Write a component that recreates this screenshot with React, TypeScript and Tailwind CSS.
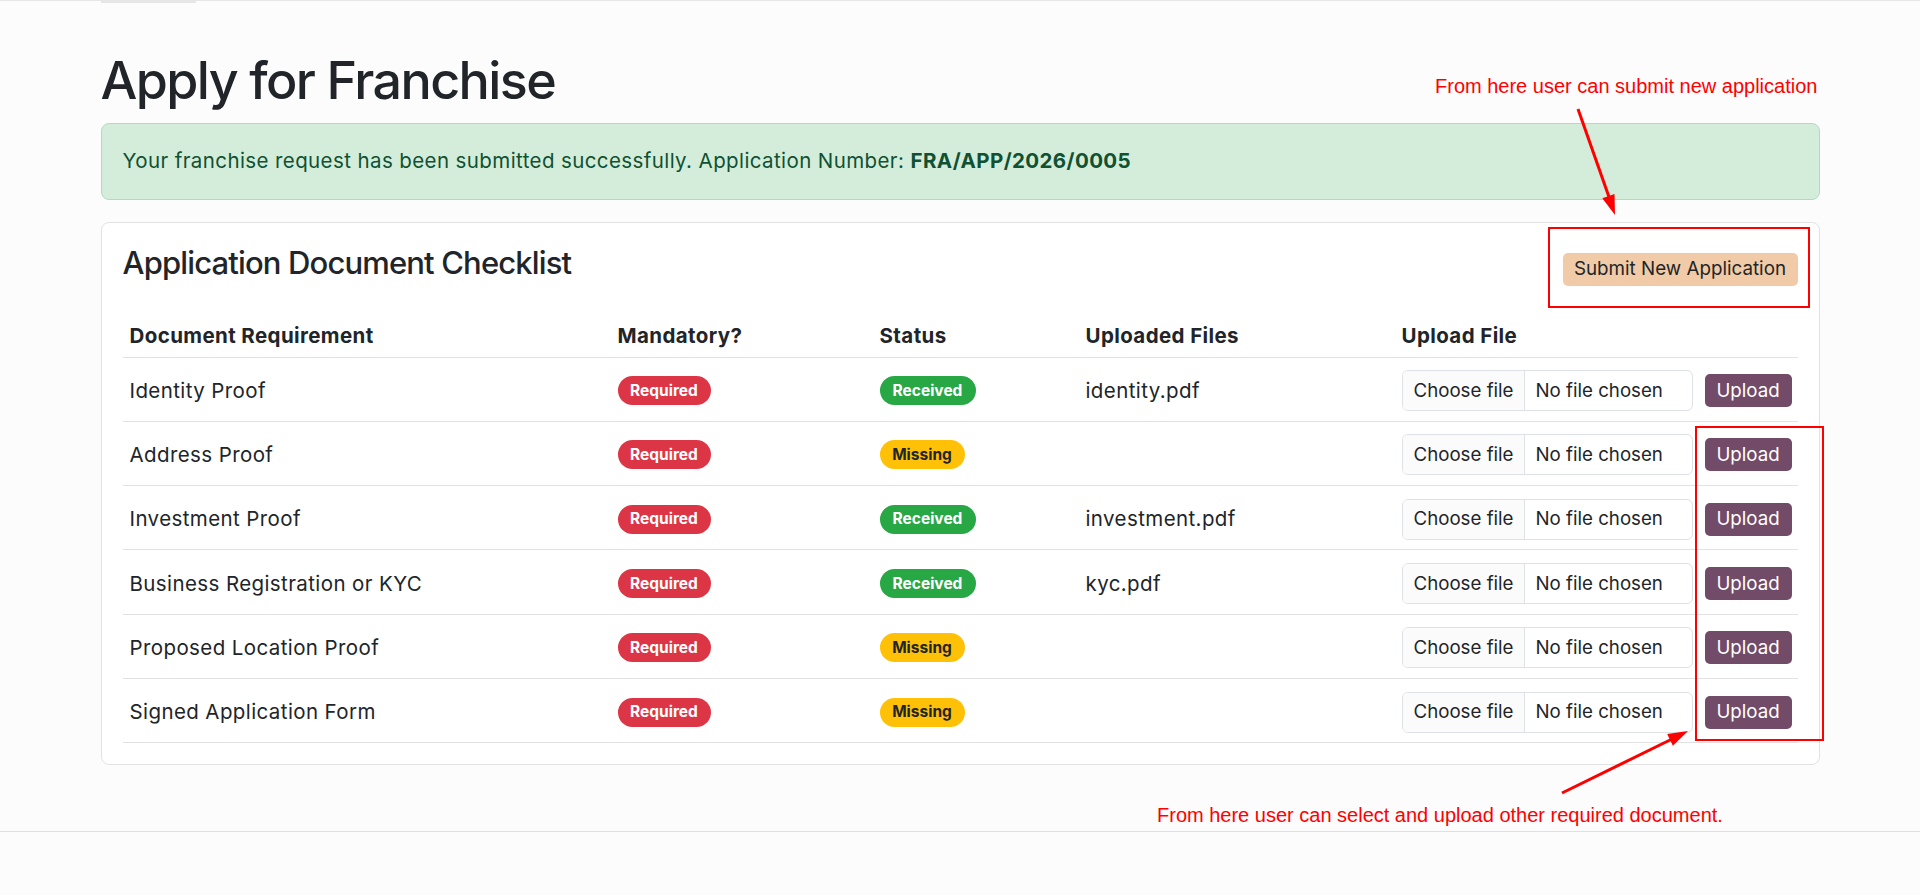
import React from "react";

type Row = {
  name: string;
  status: "Received" | "Missing";
  file: string;
};

const rows: Row[] = [
  { name: "Identity Proof", status: "Received", file: "identity.pdf" },
  { name: "Address Proof", status: "Missing", file: "" },
  { name: "Investment Proof", status: "Received", file: "investment.pdf" },
  { name: "Business Registration or KYC", status: "Received", file: "kyc.pdf" },
  { name: "Proposed Location Proof", status: "Missing", file: "" },
  { name: "Signed Application Form", status: "Missing", file: "" },
];

const grid = "grid grid-cols-[488px_262px_206px_316px_1fr]";

function StatusBadge({ status }: { status: Row["status"] }) {
  if (status === "Received") {
    return (
      <span className="inline-flex items-center justify-center w-[96px] h-[29px] rounded-full bg-[#28a745] text-white text-[15.5px] font-bold">
        Received
      </span>
    );
  }
  return (
    <span className="inline-flex items-center justify-center w-[85px] h-[29px] rounded-full bg-[#ffc107] text-[#212529] text-[15.5px] font-bold">
      Missing
    </span>
  );
}

function FileInput() {
  return (
    <div className="flex items-center">
      <div className="flex w-[291px] h-[41px] border border-[#dee2e6] rounded-[6px] overflow-hidden bg-white">
        <div className="w-[122px] shrink-0 flex items-center px-[11px] bg-[#fbfbfb] border-r border-[#dee2e6] text-[18.7px] text-[#212529] whitespace-nowrap">
          Choose file
        </div>
        <div className="flex items-center px-[11px] text-[18.7px] text-[#212529] whitespace-nowrap">
          No file chosen
        </div>
      </div>
      <button className="ml-[12px] w-[87px] h-[33px] rounded-[5px] bg-[#714b67] text-white text-[18.7px] flex items-center justify-center">
        Upload
      </button>
    </div>
  );
}

export default function App() {
  return (
    <div
      className="relative min-h-[895px] bg-[#fcfcfc] text-[#212529]"
      style={{ fontFamily: "Inter, 'Noto Sans', sans-serif" }}
    >
      {/* top remnant of navbar */}
      <div className="w-full border-t border-[#e6e6e6]">
        <div className="mx-auto w-[1719px]">
          <div className="w-[95px] h-[2px] bg-[#e6e6e6]" />
        </div>
      </div>

      <div className="mx-auto w-[1719px]">
        <h1 className="mt-[45px] text-[52px] leading-[65px] font-medium tracking-[-1.6px]">
          Apply for Franchise
        </h1>

        <div className="mt-[10px] rounded-[8px] border border-[#b1dbbf] bg-[#d4edda] px-[21px] py-[22px] text-[20.5px] leading-[30.5px] tracking-[0.4px] text-[#0f5132]">
          Your franchise request has been submitted successfully. Application Number:{" "}
          <span className="font-bold">FRA/APP/2026/0005</span>
        </div>

        <div className="mt-[22px] rounded-[8px] border border-[#e2e2e2] bg-white p-[21px]">
          <div className="flex items-start justify-between">
            <h4 className="text-[31px] leading-[38px] font-medium tracking-[-0.85px]">
              Application Document Checklist
            </h4>
            <button className="mt-[9px] w-[235px] h-[33px] rounded-[5px] bg-[#f1cba7] text-[18.8px] text-[#212529] flex items-center justify-center whitespace-nowrap">
              Submit New Application
            </button>
          </div>

          <div className="mt-[28px]">
            <div className={`${grid} h-[44px] pt-[2px] items-center border-b border-[#e2e2e2] text-[20.5px] leading-[30px] tracking-[0.4px] font-bold`}>
              <div className="pl-[7px]">Document Requirement</div>
              <div className="pl-[7px]">Mandatory?</div>
              <div className="pl-[7px]">Status</div>
              <div className="pl-[7px]">Uploaded Files</div>
              <div className="pl-[7px]">Upload File</div>
            </div>
            {rows.map((r) => (
              <div
                key={r.name}
                className={`${grid} h-[64.3px] pt-[3px] items-center border-b border-[#e2e2e2] text-[20.5px] leading-[30px]`}
              >
                <div className="pl-[7px] tracking-[0.4px]">{r.name}</div>
                <div className="pl-[7px] flex">
                  <span className="inline-flex items-center justify-center w-[93px] h-[29px] rounded-full bg-[#dc3545] text-white text-[15.5px] font-bold">
                    Required
                  </span>
                </div>
                <div className="pl-[7px] flex">
                  <StatusBadge status={r.status} />
                </div>
                <div className="pl-[7px] tracking-[0.4px]">{r.file}</div>
                <div className="pl-[7px]">
                  <FileInput />
                </div>
              </div>
            ))}
          </div>
        </div>
      </div>

      <div className="mt-[66px] w-full border-t border-[#e0e0e0]" />

      {/* annotation overlay */}
      <div
        className="absolute left-[1435px] top-[76px] text-[20px] leading-none text-[#ff0000] whitespace-nowrap"
        style={{ fontFamily: "'Liberation Sans', Arial, sans-serif" }}
      >
        From here user can submit new application
      </div>
      <div
        className="absolute left-[1157px] top-[805px] text-[20px] leading-none text-[#ff0000] whitespace-nowrap"
        style={{ fontFamily: "'Liberation Sans', Arial, sans-serif" }}
      >
        From here user can select and upload other required document.
      </div>
      <div className="absolute left-[1548px] top-[227px] w-[262px] h-[81px] border-[2.5px] border-[#ff0000]" />
      <div className="absolute left-[1695px] top-[426px] w-[129px] h-[315px] border-[2.5px] border-[#ff0000]" />
      <svg
        className="absolute left-0 top-0 pointer-events-none"
        width="1920"
        height="895"
        viewBox="0 0 1920 895"
      >
        <line x1="1578" y1="109" x2="1609" y2="197" stroke="#ff0000" strokeWidth="3" />
        <polygon points="1615,215 1602.3,198.2 1614.5,193.9" fill="#ff0000" />
        <line x1="1562" y1="793" x2="1671" y2="739.5" stroke="#ff0000" strokeWidth="3" />
        <polygon points="1688,731 1672.9,745.7 1667.2,734" fill="#ff0000" />
      </svg>
    </div>
  );
}
